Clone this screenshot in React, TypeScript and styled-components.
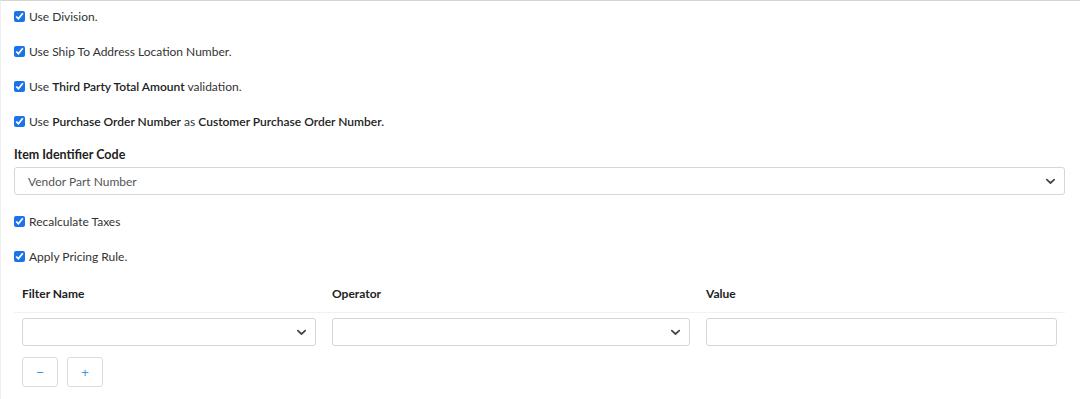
import React from 'react';
import styled, { createGlobalStyle } from 'styled-components';

const GlobalStyle = createGlobalStyle`
  html, body {
    margin: 0;
    padding: 0;
    background: #fff;
  }
  body {
    font-family: Lato, "Segoe UI", "Liberation Sans", sans-serif;
    font-size: 12px;
    color: #333;
  }
`;

const Chevron = () => (
  <svg width="11" height="7" viewBox="0 0 11 7">
    <path d="M1.8 1.6 L5.5 5 L9.2 1.6" fill="none" stroke="#444" strokeWidth="1.7" strokeLinecap="round" strokeLinejoin="round" />
  </svg>
);

const filterColumns = ['Filter Name', 'Operator', 'Value'];

const App: React.FC = () => {
  return (
    <>
      <GlobalStyle />
      <Page>
        <CheckRow>
          <Check type="checkbox" defaultChecked />
          <span>Use Division.</span>
        </CheckRow>
        <CheckRow>
          <Check type="checkbox" defaultChecked />
          <span>Use Ship To Address Location Number.</span>
        </CheckRow>
        <CheckRow>
          <Check type="checkbox" defaultChecked />
          <span>
            Use <Strong>Third Party Total Amount</Strong> validation.
          </span>
        </CheckRow>
        <CheckRow>
          <Check type="checkbox" defaultChecked />
          <span>
            Use <Strong>Purchase Order Number</Strong> as <Strong>Customer Purchase Order Number.</Strong>
          </span>
        </CheckRow>

        <FieldLabel>Item Identifier Code</FieldLabel>
        <SelectBox>
          <SelectText>Vendor Part Number</SelectText>
          <Chevron />
        </SelectBox>

        <CheckRow>
          <Check type="checkbox" defaultChecked />
          <span>Recalculate Taxes</span>
        </CheckRow>
        <CheckRow last>
          <Check type="checkbox" defaultChecked />
          <span>Apply Pricing Rule.</span>
        </CheckRow>

        <FilterTable>
          {filterColumns.map((c) => (
            <HeadCell key={c}>{c}</HeadCell>
          ))}
          <BodyCell>
            <SelectBox small>
              <SelectText />
              <Chevron />
            </SelectBox>
          </BodyCell>
          <BodyCell>
            <SelectBox small>
              <SelectText />
              <Chevron />
            </SelectBox>
          </BodyCell>
          <BodyCell>
            <TextInput />
          </BodyCell>
        </FilterTable>

        <ButtonRow>
          <SmallButton>−</SmallButton>
          <SmallButton>+</SmallButton>
        </ButtonRow>
      </Page>
    </>
  );
};

export default App;

const Page = styled.div`
  width: 1080px;
  height: 399px;
  box-sizing: border-box;
  border-top: 1px solid #d4d4d4;
  border-left: 1px solid #eeeeee;
  padding: 5px 15px 0 13px;
  overflow: hidden;
`;

const CheckRow = styled.label<{ last?: boolean }>`
  display: flex;
  align-items: center;
  gap: 4px;
  height: 20px;
  margin-bottom: ${(p) => (p.last ? '14px' : '15px')};
  font-size: 12px;
  color: #333;
`;

const Check = styled.input`
  width: 11px;
  height: 11px;
  margin: 0;
  accent-color: #1a73e8;
`;

const Strong = styled.b`
  font-weight: 600;
  color: #222;
`;

const FieldLabel = styled.div`
  font-size: 12.5px;
  font-weight: 700;
  color: #222;
  line-height: 20px;
  margin-top: -1px;
`;

const SelectBox = styled.div<{ small?: boolean }>`
  display: flex;
  align-items: center;
  justify-content: space-between;
  box-sizing: border-box;
  height: 28px;
  margin: 2px 0 16px;
  padding: 0 8px 0 13px;
  border: 1px solid #d6d6d6;
  border-radius: 3px;
  background: #fff;
  ${(p) => p.small && `margin: 0;`}
`;

const SelectText = styled.span`
  font-size: 12px;
  color: #555;
`;

const FilterTable = styled.div`
  display: grid;
  grid-template-columns: 310px 374px 1fr;
  width: 1051px;
`;

const HeadCell = styled.div`
  padding: 4px 8px 8px;
  line-height: 20px;
  font-size: 12px;
  font-weight: 700;
  color: #222;
  border-bottom: 1px solid #f2f2f2;
`;

const BodyCell = styled.div`
  padding: 5px 8px 0;
`;

const TextInput = styled.input`
  display: block;
  box-sizing: border-box;
  width: 100%;
  height: 28px;
  border: 1px solid #d6d6d6;
  border-radius: 3px;
  outline: none;
`;

const ButtonRow = styled.div`
  display: flex;
  gap: 9px;
  padding: 11px 8px 0;
`;

const SmallButton = styled.button`
  width: 36px;
  height: 30px;
  box-sizing: border-box;
  border: 1px solid #dcdcdc;
  border-radius: 3px;
  background: #fff;
  color: #3a9ad9;
  font-family: "Liberation Sans", sans-serif;
  font-size: 13px;
  padding: 0;
`;
